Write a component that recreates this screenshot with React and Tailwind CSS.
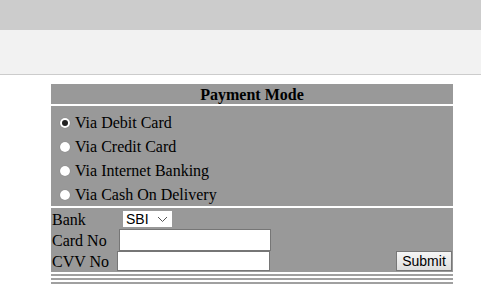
import React from "react";

function Radio({ checked }) {
  return (
    <span className="inline-block w-[10px] h-[10px] rounded-full bg-white mr-[5px] relative shrink-0 shadow-[0_0_1px_rgba(0,0,0,0.3)]">
      {checked && (
        <span className="absolute left-[2px] top-[2px] w-[6px] h-[6px] rounded-full bg-[#222]" />
      )}
    </span>
  );
}

export default function App() {
  const opts = [
    "Via Debit Card",
    "Via Credit Card",
    "Via Internet Banking",
    "Via Cash On Delivery",
  ];
  return (
    <div className="w-[481px] h-[290px] bg-white overflow-hidden text-black" style={{ fontFamily: '"Liberation Serif", "Times New Roman", serif' }}>
      <div className="h-[30px] bg-[#cccccc]" />
      <div className="h-[45px] bg-[#f2f2f2] border-b border-[#cccccc]" />
      <div className="ml-[51px] w-[402px] mt-[9px]">
        <div className="h-[20px] bg-[#999999] flex items-center justify-center text-[16px] font-bold leading-none pt-[1px]">
          Payment Mode
        </div>
        <div className="h-[2px]" />
        <div className="h-[100px] bg-[#999999] pt-[5px] pl-[9px] overflow-hidden">
          {opts.map((o, i) => (
            <div key={o} className="h-[24px] flex items-center text-[16px] leading-none">
              <Radio checked={i === 0} />
              <span>{o}</span>
            </div>
          ))}
        </div>
        <div className="h-[2px]" />
        <div className="h-[64px] bg-[#999999] text-[16px] leading-none relative">
          <div className="h-[21px] flex items-center pl-[1px] pt-[1px]">
            <span className="w-[70px] pt-[2px]">Bank</span>
            <div className="h-[18px] w-[51px] bg-white border border-[#999] flex items-center justify-between pl-[3px] pr-[4px]" style={{ fontFamily: '"Liberation Sans", Arial, sans-serif' }}>
              <span className="text-[14px] leading-none">SBI</span>
              <svg width="11" height="7" viewBox="0 0 11 7" className="mt-[1px]">
                <path d="M1 1 L5.5 5.5 L10 1" fill="none" stroke="#555" strokeWidth="1" />
              </svg>
            </div>
          </div>
          <div className="h-[22px] flex items-center pl-[1px]">
            <span className="w-[67px] pt-[2px]">Card No</span>
            <div className="h-[22px] w-[152px] bg-white border border-[#767676]" />
          </div>
          <div className="h-[20px] flex items-center pl-[1px]">
            <span className="w-[65px] pt-[1px]">CVV No</span>
            <div className="h-[20px] w-[153px] bg-white border border-[#767676]" />
            <div className="ml-auto mr-[1px] h-[20px] w-[56px] border border-[#777] bg-gradient-to-b from-[#f6f6f6] to-[#dedede] flex items-center justify-center text-[14px]" style={{ fontFamily: '"Liberation Sans", Arial, sans-serif' }}>
              Submit
            </div>
          </div>
        </div>
        <div className="h-[2px]" />
        <div className="h-[2px] bg-[#a0a0a0]" />
        <div className="h-[2px]" />
        <div className="h-[2px] bg-[#a0a0a0]" />
        <div className="h-[2px]" />
        <div className="h-[2px] bg-[#a0a0a0]" />
      </div>
    </div>
  );
}
